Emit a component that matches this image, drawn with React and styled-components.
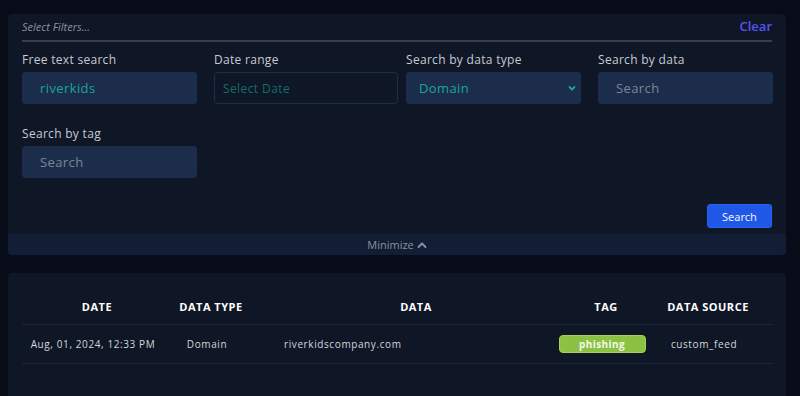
import React from 'react';
import styled, {createGlobalStyle} from 'styled-components';

const GlobalStyle = createGlobalStyle`
  body {
    margin: 0;
    background: #080b18;
    font-family: "Open Sans", "DejaVu Sans", sans-serif;
  }
`

const rows = [
  {date: 'Aug, 01, 2024, 12:33 PM', type: 'Domain', data: 'riverkidscompany.com', tag: 'phishing', source: 'custom_feed'},
];

function Chevron({up}) {
  return (
    <svg width="10" height="10" viewBox="0 0 10 10" fill="none" stroke="currentColor" strokeWidth="1.8" strokeLinecap="round" strokeLinejoin="round">
      {up ? <path d="M1.5 7 L5 3.5 L8.5 7" /> : <path d="M2.5 4 L5 6.5 L7.5 4" />}
    </svg>
  );
}

function App() {
  return (
    <Page>
      <GlobalStyle />
      <FilterPanel>
        <FilterBody>
          <FilterHeader>
            <span className='hint'>Select Filters...</span>
            <ClearLink>Clear</ClearLink>
          </FilterHeader>
          <FieldGrid>
            <Field>
              <Label>Free text search</Label>
              <Input filled>riverkids</Input>
            </Field>
            <Field>
              <Label>Date range</Label>
              <Input outline>Select Date</Input>
            </Field>
            <Field>
              <Label>Search by data type</Label>
              <Input filled select>
                Domain
                <Chevron />
              </Input>
            </Field>
            <Field>
              <Label>Search by data</Label>
              <Input>Search</Input>
            </Field>
            <Field>
              <Label>Search by tag</Label>
              <Input>Search</Input>
            </Field>
          </FieldGrid>
          <ButtonRow>
            <SearchButton>Search</SearchButton>
          </ButtonRow>
        </FilterBody>
        <MinimizeBar>
          Minimize <Chevron up />
        </MinimizeBar>
      </FilterPanel>

      <TablePanel>
        <TableGrid>
          <HeadCell>DATE</HeadCell>
          <HeadCell>DATA TYPE</HeadCell>
          <HeadCell shift={14}>DATA</HeadCell>
          <HeadCell>TAG</HeadCell>
          <HeadCell>DATA SOURCE</HeadCell>
          {rows.map((r, i) => (
            <React.Fragment key={i}>
              <Cell>{r.date}</Cell>
              <Cell>{r.type}</Cell>
              <Cell left>{r.data}</Cell>
              <Cell><TagPill>{r.tag}</TagPill></Cell>
              <Cell>{r.source}</Cell>
            </React.Fragment>
          ))}
        </TableGrid>
      </TablePanel>
    </Page>
  );
}

export default App;

const Page = styled.div`
  display: flex;
  flex-direction: column;
  gap: 18px;
  padding: 14px 14px 0 8px;
  min-height: 396px;
  box-sizing: border-box;
`
const FilterPanel = styled.div`
  background: #0f1726;
  border-radius: 4px;
  overflow: hidden;
`
const FilterBody = styled.div`
  padding: 0 14px 6px 14px;
`
const FilterHeader = styled.div`
  height: 28px;
  box-sizing: border-box;
  padding-top: 5px;
  display: flex;
  justify-content: space-between;
  align-items: flex-start;
  border-bottom: 2px solid #363d4b;

  .hint{
    color: #8a909c;
    font-size: 11px;
    line-height: 15px;
    font-style: italic;
  }
`
const ClearLink = styled.span`
  color: #5753f5;
  font-size: 13px;
  line-height: 17px;
  font-weight: 600;
  margin-top: -1px;
`
const FieldGrid = styled.div`
  display: grid;
  grid-template-columns: repeat(4, 175px);
  column-gap: 17px;
  row-gap: 22px;
  margin-top: 10px;
`
const Field = styled.div`
  display: flex;
  flex-direction: column;
  gap: 4px;
`
const Label = styled.label`
  color: #c6cad3;
  font-size: 12px;
  line-height: 16px;
  letter-spacing: 0.3px;
`
const Input = styled.div`
  height: 32px;
  box-sizing: border-box;
  width: ${p => p.outline ? '184px' : '175px'};
  display: flex;
  align-items: center;
  justify-content: space-between;
  padding: 0 ${p => p.select ? '3px' : '14px'} 0 ${p => p.select ? '12px' : p.outline ? '8px' : '17px'};
  border-radius: 4px;
  font-size: ${p => p.outline ? '12px' : '13px'};
  letter-spacing: 0.4px;
  background: ${p => p.outline ? 'transparent' : '#1c2d4b'};
  border: 1px solid ${p => p.outline ? '#1c2d4b' : 'transparent'};
  color: ${p => p.outline ? '#0f6e68' : p.filled ? '#1ba596' : '#7b8596'};
`
const ButtonRow = styled.div`
  display: flex;
  justify-content: flex-end;
  margin-top: 26px;
`
const SearchButton = styled.button`
  width: 65px;
  height: 24px;
  background: #1f57e6;
  color: #e8eeff;
  border: 1px solid #2a63f0;
  border-radius: 3px;
  font-family: "Noto Sans", sans-serif;
  font-size: 11px;
  cursor: pointer;
`
const MinimizeBar = styled.div`
  height: 21px;
  background: #111e36;
  display: flex;
  align-items: center;
  justify-content: center;
  gap: 3px;
  color: #8b919d;
  font-size: 11px;
`
const TablePanel = styled.div`
  background: #0f1726;
  border-radius: 4px 4px 0 0;
  padding: 15px 14px 0 14px;
  flex: 1;
`
const TableGrid = styled.div`
  display: grid;
  grid-template-columns: 150px 78px 318px 76px 128px;
`
const HeadCell = styled.div`
  height: 36px;
  display: flex;
  align-items: center;
  justify-content: center;
  padding-left: ${p => p.shift || 0}px;
  color: #ffffff;
  font-size: 11px;
  font-weight: 700;
  letter-spacing: 0.5px;
  border-bottom: 1px solid #1a2540;
`
const Cell = styled.div`
  height: 38px;
  display: flex;
  align-items: center;
  justify-content: ${p => p.left ? 'flex-start' : 'center'};
  padding: ${p => p.left ? '0 0 0 34px' : '0 8px 0 0'};
  color: #d3d6dc;
  font-size: 10px;
  letter-spacing: 0.6px;
  white-space: nowrap;
  border-bottom: 1px solid #1a2540;
`
const TagPill = styled.span`
  width: 87px;
  height: 18px;
  flex-shrink: 0;
  display: flex;
  align-items: center;
  justify-content: center;
  background: #8bc243;
  border: 1px solid #a2d25a;
  box-sizing: border-box;
  border-radius: 4px;
  color: #f4f9ec;
  font-size: 10px;
  font-weight: 700;
  letter-spacing: 0.4px;
`
